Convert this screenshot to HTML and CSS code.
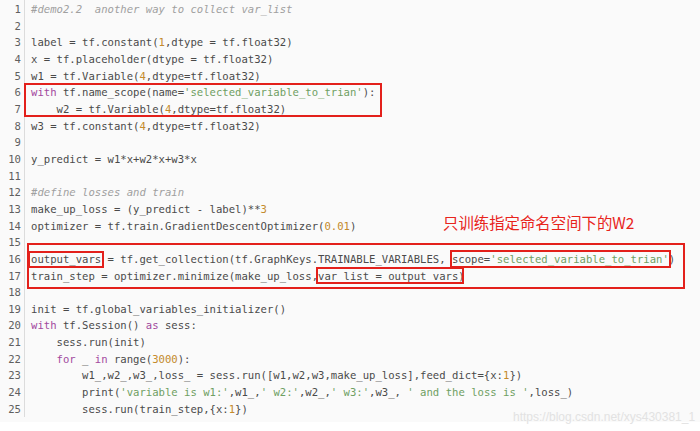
FILE: index.html
```html
<!DOCTYPE html>
<html>
<head>
<meta charset="utf-8">
<link rel="stylesheet" href="styles.css">
</head>
<body>
<div class="page">
  <div class="code">
    <div class="gutter">
      <div class="ln">1</div><div class="ln">2</div><div class="ln">3</div><div class="ln">4</div><div class="ln">5</div>
      <div class="ln">6</div><div class="ln">7</div><div class="ln">8</div><div class="ln">9</div><div class="ln">10</div>
      <div class="ln">11</div><div class="ln">12</div><div class="ln">13</div><div class="ln">14</div><div class="ln">15</div>
      <div class="ln">16</div><div class="ln">17</div><div class="ln">18</div><div class="ln">19</div><div class="ln">20</div>
      <div class="ln">21</div><div class="ln">22</div><div class="ln">23</div><div class="ln">24</div><div class="ln">25</div>
    </div>
    <div class="src">
      <div class="line"><span class="c">#demo2.2  another way to collect var_list</span></div>
      <div class="line"></div>
      <div class="line">label = tf.constant(<span class="n">1</span>,dtype = tf.float32)</div>
      <div class="line">x = tf.placeholder(dtype = tf.float32)</div>
      <div class="line">w1 = tf.Variable(<span class="n">4</span>,dtype=tf.float32)</div>
      <div class="box box-scope">
        <div class="line"><span class="k">with</span> tf.name_scope(name=<span class="s">'selected_variable_to_trian'</span>):</div>
        <div class="line">    w2 = tf.Variable(<span class="n">4</span>,dtype=tf.float32)</div>
      </div>
      <div class="line">w3 = tf.constant(<span class="n">4</span>,dtype=tf.float32)</div>
      <div class="line"></div>
      <div class="line">y_predict = w1*x+w2*x+w3*x</div>
      <div class="line"></div>
      <div class="line"><span class="c">#define losses and train</span></div>
      <div class="line">make_up_loss = (y_predict - label)**<span class="n">3</span></div>
      <div class="line">optimizer = tf.train.GradientDescentOptimizer(<span class="n">0.01</span>)</div>
      <div class="line"></div>
      <div class="box box-collect">
        <div class="line"><span class="hl hl-out">output_vars</span> = tf.get_collection(tf.GraphKeys.TRAINABLE_VARIABLES, <span class="hl hl-scope">scope=<span class="s">'selected_variable_to_trian'</span></span>)</div>
        <div class="line">train_step = optimizer.minimize(make_up_loss,<span class="hl hl-var">var_list = output_vars</span>)</div>
      </div>
      <div class="line"></div>
      <div class="line">init = tf.global_variables_initializer()</div>
      <div class="line"><span class="k">with</span> tf.Session() <span class="k">as</span> sess:</div>
      <div class="line">    sess.run(init)</div>
      <div class="line">    <span class="k">for</span> _ <span class="k">in</span> range(<span class="n">3000</span>):</div>
      <div class="line">        w1_,w2_,w3_,loss_ = sess.run([w1,w2,w3,make_up_loss],feed_dict={x:<span class="n">1</span>})</div>
      <div class="line">        print(<span class="s">'variable is w1:'</span>,w1_,<span class="s">' w2:'</span>,w2_,<span class="s">' w3:'</span>,w3_, <span class="s">' and the loss is '</span>,loss_)</div>
      <div class="line">        sess.run(train_step,{x:<span class="n">1</span>})</div>
    </div>
  </div>
  <div class="note">只训练指定命名空间下的W2</div>
  <div class="wm">https://blog.csdn.net/xys430381_1</div>
</div>
</body>
</html>
```
FILE: styles.css
```css
html, body {
  margin: 0;
  padding: 0;
  background: #ffffff;
}

.page {
  position: relative;
  width: 700px;
  height: 431px;
  overflow: hidden;
}

.code {
  display: grid;
  grid-template-columns: 25px 1fr;
  background: #fafafa;
  padding: 1px 0 5px 0;
  font-family: "DejaVu Sans Mono", monospace;
  font-size: 10.6px;
  line-height: 16.67px;
  color: #4a4a4a;
}

.gutter {
  border-right: 1px solid #dcdcdc;
  margin-top: -1px;
  padding-top: 1px;
}

.ln {
  height: 16.67px;
  text-align: right;
  padding-right: 3px;
  color: #5f5f5f;
}

.src {
  padding-left: 6px;
  min-width: 0;
}

.line {
  height: 16.67px;
  white-space: pre;
}

.c { color: #a0a0a0; font-style: italic; }
.s { color: #6f9f62; }
.n { color: #c48a2c; }
.k { color: #a2499e; }

.box {
  position: relative;
}

.box::after {
  content: "";
  position: absolute;
  border: 2px solid #e3201b;
  box-sizing: border-box;
  pointer-events: none;
}

.box-scope::after {
  top: -1px;
  bottom: 1px;
  left: -7px;
  width: 358px;
}

.box-collect::after {
  top: -8px;
  bottom: -5px;
  left: -4px;
  width: 658px;
}

.hl {
  outline: 2px solid #e3201b;
}

.hl-out {
  padding: 0 1px 1px 1px;
  margin: 0 -1px 0 -1px;
}

.hl-scope {
  padding: 1px 0 1px 0;
}

.hl-var {
  padding: 1px 4px 0 0;
  margin-right: -4px;
}

.note {
  position: absolute;
  left: 443px;
  top: 212px;
  font-family: "Noto Sans CJK SC", "Noto Sans", sans-serif;
  font-size: 15.4px;
  line-height: 20px;
  color: #e8241c;
  white-space: nowrap;
}

.wm {
  position: absolute;
  left: 513px;
  top: 410px;
  font-family: "Liberation Sans", Arial, sans-serif;
  font-size: 12px;
  line-height: 14px;
  color: #e2e2e2;
  white-space: nowrap;
}
```
